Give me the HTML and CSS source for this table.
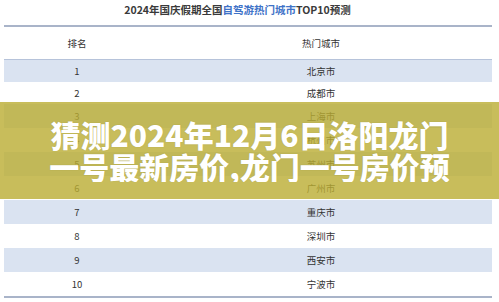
FILE: index.html
```html
<!DOCTYPE html>
<html lang="zh">
<head>
<meta charset="utf-8">
<link rel="stylesheet" href="styles.css">
</head>
<body>
<div class="page">
  <h1 class="title">2024年国庆假期全国<span class="hl">自驾游热门城市</span>TOP10预测</h1>
  <div class="rank">
    <div class="row head"><div class="c1">排名</div><div class="c2">热门城市</div></div>
    <div class="row short alt first"><div class="c1">1</div><div class="c2">北京市</div></div>
    <div class="row short"><div class="c1">2</div><div class="c2">成都市</div></div>
    <div class="row alt"><div class="c1">3</div><div class="c2">上海市</div></div>
    <div class="row"><div class="c1">4</div><div class="c2">杭州市</div></div>
    <div class="row alt"><div class="c1">5</div><div class="c2">苏州市</div></div>
    <div class="row"><div class="c1">6</div><div class="c2">广州市</div></div>
    <div class="row alt"><div class="c1">7</div><div class="c2">重庆市</div></div>
    <div class="row"><div class="c1">8</div><div class="c2">深圳市</div></div>
    <div class="row alt"><div class="c1">9</div><div class="c2">西安市</div></div>
    <div class="row"><div class="c1">10</div><div class="c2">宁波市</div></div>
  </div>
  <div class="banner">
    <p class="banner-text">猜测2024年12月6日洛阳龙门一号最新房价,龙门一号房价预测与分析</p>
  </div>
</div>
</body>
</html>
```
FILE: styles.css
```css
html, body {
  margin: 0;
  padding: 0;
  background: #ffffff;
}
.page {
  position: relative;
  width: 499px;
  height: 302px;
  overflow: hidden;
  font-family: "Noto Sans CJK SC", "Noto Sans", sans-serif;
  color: #333333;
}
.title {
  margin: 0 0 5px;
  padding-right: 24px;
  height: 20px;
  line-height: 20px;
  font-size: 10.5px;
  font-weight: bold;
  text-align: center;
  color: #3a3a3a;
}
.hl {
  color: #3f73c8;
}
.rank {
  margin: 0 7px 0 4px;
  border-top: 2px solid #a9b4c9;
  border-bottom: 2px solid #a9b4c9;
  font-size: 9.5px;
}
.row {
  display: grid;
  grid-template-columns: 146px 1fr;
  height: 24px;
  align-items: center;
  text-align: center;
}
.row.short {
  height: 22px;
}
.row.head {
  height: 32px;
}
.row.first {
  border-top: 1px solid #b6c3da;
}
.row.alt {
  background: #dae3f1;
}
.banner {
  position: absolute;
  left: 0;
  right: 0;
  top: 102px;
  height: 97px;
  background: rgba(186, 172, 50, 0.8);
  display: flex;
  justify-content: center;
}
.banner-text {
  margin: 16px 0 0;
  width: 412px;
  height: 64px;
  overflow: hidden;
  font-size: 30px;
  line-height: 32px;
  font-weight: 900;
  text-align: center;
  color: #ffffff;
  text-shadow: 0 0 1px rgba(120, 110, 40, 0.4);
}
```
